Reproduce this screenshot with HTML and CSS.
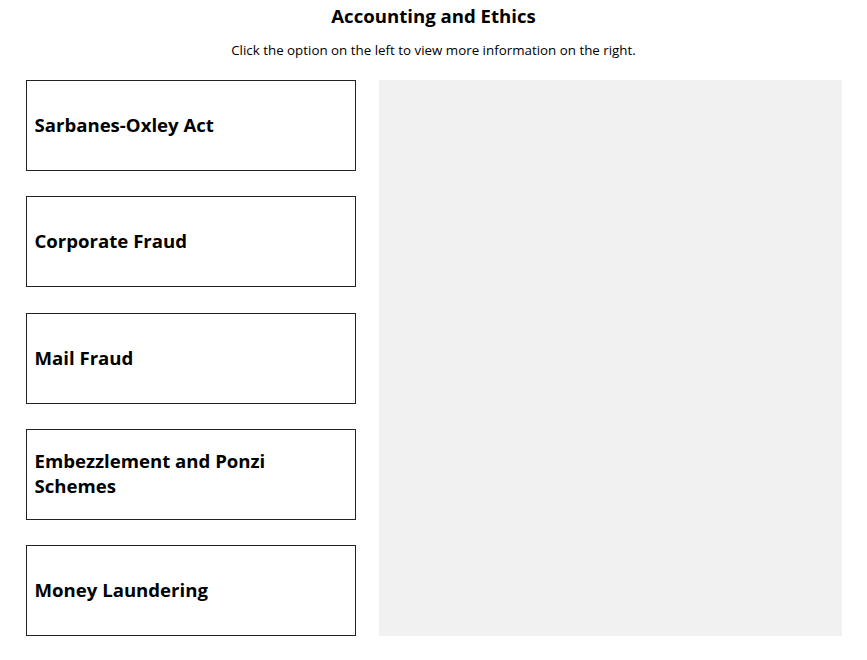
FILE: index.html
```html
<!DOCTYPE html>
<html lang="en">
<head>
    <meta charset="UTF-8">
    <meta name="viewport" content="width=device-width, initial-scale=1.0">
    <title>Accounting and Ethics</title>
    <link rel="stylesheet" href="styles.css">
</head>
<body>

    <h2 class="title">Accounting and Ethics</h2>
    <p class="intro">Click the option on the left to view more information on the right.</p>

    <div class="layout">
        <!-- Options list -->
        <div class="options">
            <div class="option">Sarbanes-Oxley Act</div>
            <div class="option">Corporate Fraud</div>
            <div class="option">Mail Fraud</div>
            <div class="option">Embezzlement and Ponzi Schemes</div>
            <div class="option">Money Laundering</div>
        </div>

        <!-- Info panel -->
        <div class="info"></div>
    </div>

</body>
</html>
```

FILE: styles.css
```css
/* General page styling */
body {
    font-family: "Open Sans", Arial, sans-serif;
    background: #ffffff;
    color: #000000;
    margin: 0;
    padding: 0;
}

.title {
    font-size: 18.6px;
    font-weight: bold;
    text-align: center;
    line-height: 27px;
    margin: 2px 0 0;
}

.intro {
    font-size: 13.35px;
    text-align: center;
    line-height: 19px;
    margin: 12px 0 0;
}

/* Two column layout */
.layout {
    display: grid;
    grid-template-columns: 330px 463px;
    gap: 23px;
    width: 816px;
    margin: 20px auto 0;
    height: 556px;
}

.options {
    display: flex;
    flex-direction: column;
    justify-content: space-between;
}

.option {
    box-sizing: border-box;
    height: 91px;
    border: 1px solid #222222;
    padding: 0 60px 2px 8px;
    display: flex;
    align-items: center;
    font-size: 18.6px;
    font-weight: bold;
    line-height: 25px;
    cursor: pointer;
}

.info {
    background: #f1f1f1;
}
```
